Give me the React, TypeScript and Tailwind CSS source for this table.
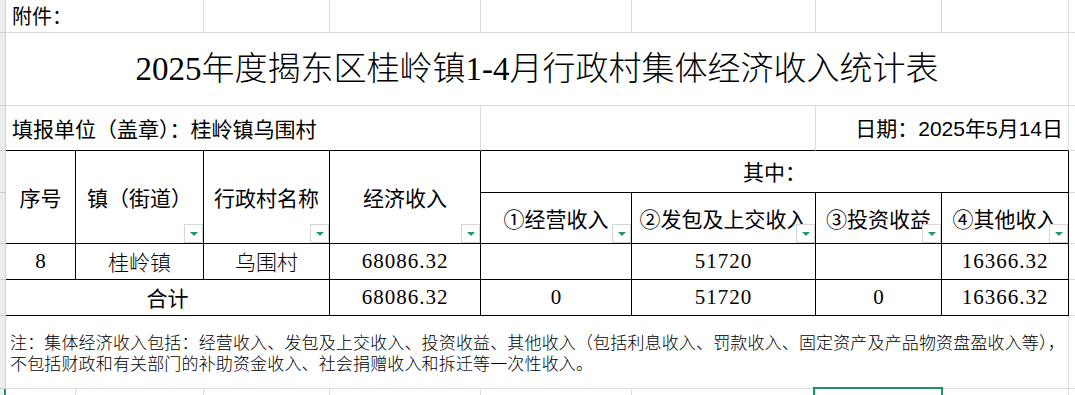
import React from "react";

// Spreadsheet-like sheet: 1-4月 village collective income table

function FilterBtn() {
  return (
    <span className="absolute right-0 bottom-0 flex h-[19px] w-[19px] items-center justify-center border border-[#d6d6d6] bg-white">
      <svg width="8" height="4" viewBox="0 0 8 4">
        <path d="M0 0H8L4 4Z" fill="#1c9a69" />
      </svg>
    </span>
  );
}

export default function App() {
  return (
    <div className="h-[395px] w-full overflow-hidden bg-white text-black">
      <div className="grid grid-cols-[6px_70px_128px_126px_151px_151px_184px_126px_127px_1fr] grid-rows-[33px_73px_45px_42px_51px_36px_36px_73px_20px]">
        {/* row 1 */}
        <div className="border-r border-b border-[#cfcfcf] bg-[#ededed]" />
        <div className="col-span-2 flex items-center border-r border-b border-[#dcdcdc] pl-[6px] font-['Noto_Sans_CJK_SC',sans-serif] text-[20px] leading-none">
          附件：
        </div>
        <div className="border-r border-b border-[#dcdcdc]" />
        <div className="border-r border-b border-[#dcdcdc]" />
        <div className="border-r border-b border-[#dcdcdc]" />
        <div className="border-r border-b border-[#dcdcdc]" />
        <div className="border-r border-b border-[#dcdcdc]" />
        <div className="border-r border-b border-[#dcdcdc]" />
        <div className="border-b border-[#dcdcdc]" />

        {/* row 2: title */}
        <div className="border-r border-b border-[#cfcfcf] bg-[#ededed]" />
        <div className="col-span-8 flex items-center justify-center border-r border-b border-[#dcdcdc] font-['Liberation_Serif','Noto_Sans_CJK_SC',serif] text-[33px] font-light leading-none">
          2025年度揭东区桂岭镇1-4月行政村集体经济收入统计表
        </div>
        <div className="border-b border-[#dcdcdc]" />

        {/* row 3 */}
        <div className="border-r border-b border-[#cfcfcf] bg-[#ededed]" />
        <div className="col-span-4 flex items-center border-r border-b border-r-[#dcdcdc] border-b-black pl-[6px] font-['Noto_Sans_CJK_SC',sans-serif] text-[21px] leading-none">
          填报单位（盖章）：桂岭镇乌围村
        </div>
        <div className="col-span-2 border-r border-b border-r-[#dcdcdc] border-b-black" />
        <div className="col-span-2 flex items-center justify-end border-r border-b border-r-[#dcdcdc] border-b-black pr-[5px] font-['Liberation_Sans','Noto_Sans_CJK_SC',sans-serif] text-[21px] leading-none">
          日期：2025年5月14日
        </div>
        <div className="border-b border-[#dcdcdc]" />

        {/* row 4 + 5: headers */}
        <div className="border-r border-b border-[#cfcfcf] bg-[#ededed]" />
        <div className="row-span-2 flex items-center justify-center border-r border-b border-black font-['Noto_Sans_CJK_SC',sans-serif] text-[21px] leading-none">
          序号
        </div>
        <div className="relative row-span-2 flex items-center justify-center border-r border-b border-black font-['Noto_Sans_CJK_SC',sans-serif] text-[21px] leading-none">
          镇（街道）
          <FilterBtn />
        </div>
        <div className="relative row-span-2 flex items-center justify-center border-r border-b border-black font-['Noto_Sans_CJK_SC',sans-serif] text-[21px] leading-none">
          行政村名称
          <FilterBtn />
        </div>
        <div className="relative row-span-2 flex items-center justify-center border-r border-b border-black font-['Noto_Sans_CJK_SC',sans-serif] text-[21px] leading-none">
          经济收入
          <FilterBtn />
        </div>
        <div className="col-span-4 flex items-center justify-center border-r border-b border-black font-['Noto_Sans_CJK_SC',sans-serif] text-[21px] leading-none">
          其中：
        </div>
        <div className="border-b border-[#dcdcdc]" />

        <div className="border-r border-b border-[#cfcfcf] bg-[#ededed]" />
        <div className="relative flex items-center justify-center border-r border-b border-black font-['Noto_Sans_CJK_SC',sans-serif] text-[21px] leading-none">
          ①经营收入
          <FilterBtn />
        </div>
        <div className="relative flex items-center justify-center border-r border-b border-black font-['Noto_Sans_CJK_SC',sans-serif] text-[21px] leading-none">
          ②发包及上交收入
          <FilterBtn />
        </div>
        <div className="relative flex items-center justify-center border-r border-b border-black font-['Noto_Sans_CJK_SC',sans-serif] text-[21px] leading-none">
          ③投资收益
          <FilterBtn />
        </div>
        <div className="relative flex items-center justify-center border-r border-b border-black font-['Noto_Sans_CJK_SC',sans-serif] text-[21px] leading-none">
          ④其他收入
          <FilterBtn />
        </div>
        <div className="border-b border-[#dcdcdc]" />

        {/* row 6: data */}
        <div className="border-r border-b border-[#cfcfcf] bg-[#ededed]" />
        <div className="flex items-center justify-center border-r border-b border-black font-['Liberation_Serif',serif] text-[21px] leading-none">
          8
        </div>
        <div className="flex items-center justify-center border-r border-b border-black font-['Noto_Sans_CJK_SC',sans-serif] text-[21px] font-light leading-none">
          桂岭镇
        </div>
        <div className="flex items-center justify-center border-r border-b border-black font-['Noto_Sans_CJK_SC',sans-serif] text-[21px] font-light leading-none">
          乌围村
        </div>
        <div className="flex items-center justify-center border-r border-b border-black font-['Liberation_Serif',serif] text-[21px] tracking-[1px] leading-none">
          68086.32
        </div>
        <div className="border-r border-b border-black" />
        <div className="flex items-center justify-center border-r border-b border-black font-['Liberation_Serif',serif] text-[21px] tracking-[1px] leading-none">
          51720
        </div>
        <div className="border-r border-b border-black" />
        <div className="flex items-center justify-center border-r border-b border-black font-['Liberation_Serif',serif] text-[21px] tracking-[1px] leading-none">
          16366.32
        </div>
        <div className="border-b border-[#dcdcdc]" />

        {/* row 7: total */}
        <div className="border-r border-b border-[#cfcfcf] bg-[#ededed]" />
        <div className="col-span-3 flex items-center justify-center border-r border-b border-black font-['Noto_Sans_CJK_SC',sans-serif] text-[21px] leading-none">
          合计
        </div>
        <div className="flex items-center justify-center border-r border-b border-black font-['Liberation_Serif',serif] text-[21px] tracking-[1px] leading-none">
          68086.32
        </div>
        <div className="flex items-center justify-center border-r border-b border-black font-['Liberation_Serif',serif] text-[21px] leading-none">
          0
        </div>
        <div className="flex items-center justify-center border-r border-b border-black font-['Liberation_Serif',serif] text-[21px] tracking-[1px] leading-none">
          51720
        </div>
        <div className="flex items-center justify-center border-r border-b border-black font-['Liberation_Serif',serif] text-[21px] leading-none">
          0
        </div>
        <div className="flex items-center justify-center border-r border-b border-black font-['Liberation_Serif',serif] text-[21px] tracking-[1px] leading-none">
          16366.32
        </div>
        <div className="border-b border-[#dcdcdc]" />

        {/* row 8: note */}
        <div className="border-r border-b border-[#cfcfcf] bg-[#ededed]" />
        <div className="col-span-8 flex flex-col justify-center border-r border-b border-[#dcdcdc] pl-[4px] font-['Noto_Sans_CJK_SC',sans-serif] text-[17px] font-light leading-[21px] tracking-[0.15px]">
          <span>注：集体经济收入包括：经营收入、发包及上交收入、投资收益、其他收入（包括利息收入、罚款收入、固定资产及产品物资盘盈收入等），</span>
          <span>不包括财政和有关部门的补助资金收入、社会捐赠收入和拆迁等一次性收入。</span>
        </div>
        <div className="border-b border-[#dcdcdc]" />

        {/* row 9 */}
        <div className="border-r-2 border-b border-r-[#1c9566] border-b-[#cfcfcf] bg-[#ededed]" />
        <div className="border-r border-b border-[#dcdcdc]" />
        <div className="border-r border-b border-[#dcdcdc]" />
        <div className="border-r border-b border-[#dcdcdc]" />
        <div className="border-r border-b border-[#dcdcdc]" />
        <div className="border-r border-b border-[#dcdcdc]" />
        <div className="border-r border-b border-[#dcdcdc]" />
        <div className="relative border-r border-b border-[#dcdcdc]">
          <div className="absolute -top-[2px] -right-[2px] -bottom-[2px] -left-[3px] border-2 border-[#1c9566]" />
        </div>
        <div className="border-r border-b border-[#dcdcdc]" />
        <div className="border-b border-[#dcdcdc]" />
      </div>
    </div>
  );
}
